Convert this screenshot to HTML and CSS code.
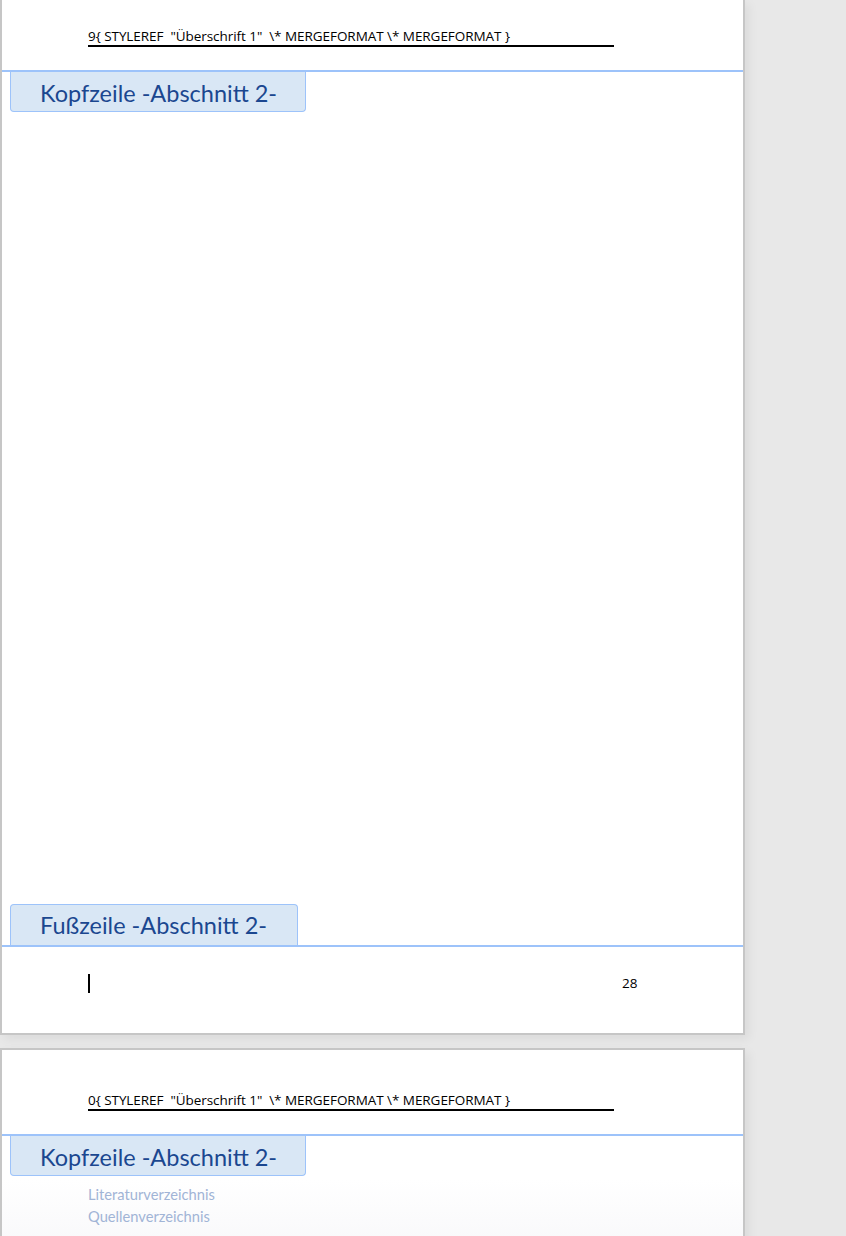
FILE: index.html
```html
<!DOCTYPE html>
<html lang="de">
<head>
<meta charset="utf-8">
<title>Kopfzeile / Fußzeile</title>
<link rel="stylesheet" href="styles.css">
</head>
<body>
<div class="desk">
  <section class="page page-first">
    <div class="header-area">
      <div class="field-line"><span class="field">9{ STYLEREF  "Überschrift 1"  \* MERGEFORMAT \* MERGEFORMAT }</span></div>
    </div>
    <div class="rule"></div>
    <div class="tab tab-head">Kopfzeile -Abschnitt 2-</div>
    <div class="body-area"></div>
    <div class="tab tab-foot">Fußzeile -Abschnitt 2-</div>
    <div class="rule"></div>
    <div class="footer-area">
      <span class="cursor"></span>
      <span class="pagenum">28</span>
    </div>
  </section>
  <section class="page page-second">
    <div class="header-area header-area-2">
      <div class="field-line"><span class="field">0{ STYLEREF  "Überschrift 1"  \* MERGEFORMAT \* MERGEFORMAT }</span></div>
    </div>
    <div class="rule"></div>
    <div class="tab tab-head">Kopfzeile -Abschnitt 2-</div>
    <div class="toc">
      <div class="toc-item">Literaturverzeichnis</div>
      <div class="toc-item">Quellenverzeichnis</div>
    </div>
  </section>
</div>
</body>
</html>
```

FILE: styles.css
```css
html, body {
  margin: 0;
  padding: 0;
}
body {
  background: #e8e8e8;
  font-family: Lato, "Open Sans", "Liberation Sans", sans-serif;
  width: 846px;
  height: 1236px;
  overflow: hidden;
}
.desk {
  display: flex;
  flex-direction: column;
  gap: 13px;
}
.page {
  width: 741px;
  background: #fff;
  border: 2px solid #c6c6c6;
  box-shadow: 4px 4px 10px rgba(0,0,0,0.06);
  display: flex;
  flex-direction: column;
}
.page-first {
  border-top: none;
  height: 1033px;
}
.page-second {
  height: 200px;
  background: linear-gradient(#fff 130px, #f8f8fa 200px);
}
.header-area {
  height: 70px;
  padding-left: 86px;
  display: flex;
  flex-direction: column;
  justify-content: flex-end;
  box-sizing: border-box;
  padding-bottom: 23px;
}
.header-area-2 {
  height: 84px;
}
.field-line {
  width: 526px;
  border-bottom: 2px solid #000;
  height: 18px;
  display: flex;
  align-items: flex-end;
}
.field {
  white-space: pre;
  font-family: "Open Sans", Lato, sans-serif;
  font-size: 13.5px;
  line-height: 17px;
  color: #000;
  letter-spacing: -0.05px;
}
.rule {
  height: 2px;
  background: #9dc3fa;
}
.tab {
  margin-left: 8px;
  width: 296px;
  height: 40px;
  box-sizing: border-box;
  background: #d9e7f5;
  border: 1px solid #9dc3fa;
  color: #1b4790;
  font-size: 23.5px;
  padding-left: 29px;
  display: flex;
  align-items: center;
}
.tab-head {
  border-top: none;
  border-radius: 0 0 4px 4px;
  padding-top: 2px;
}
.tab-foot {
  width: 288px;
  height: 41px;
  border-bottom: none;
  border-radius: 4px 4px 0 0;
  padding-left: 29px;
}
.body-area {
  flex: 1;
}
.footer-area {
  height: 86px;
  padding-left: 86px;
  padding-top: 27px;
  box-sizing: border-box;
  display: flex;
  align-items: flex-start;
}
.cursor {
  width: 2px;
  height: 19px;
  background: #000;
}
.pagenum {
  margin-left: 532px;
  font-family: "Open Sans", Lato, sans-serif;
  font-size: 13.5px;
  line-height: 16px;
  padding-top: 1px;
  color: #000;
}
.toc {
  padding-left: 86px;
  padding-top: 7px;
  display: flex;
  flex-direction: column;
}
.toc-item {
  color: #a1b4d6;
  font-size: 14.7px;
  line-height: 22px;
}
```
